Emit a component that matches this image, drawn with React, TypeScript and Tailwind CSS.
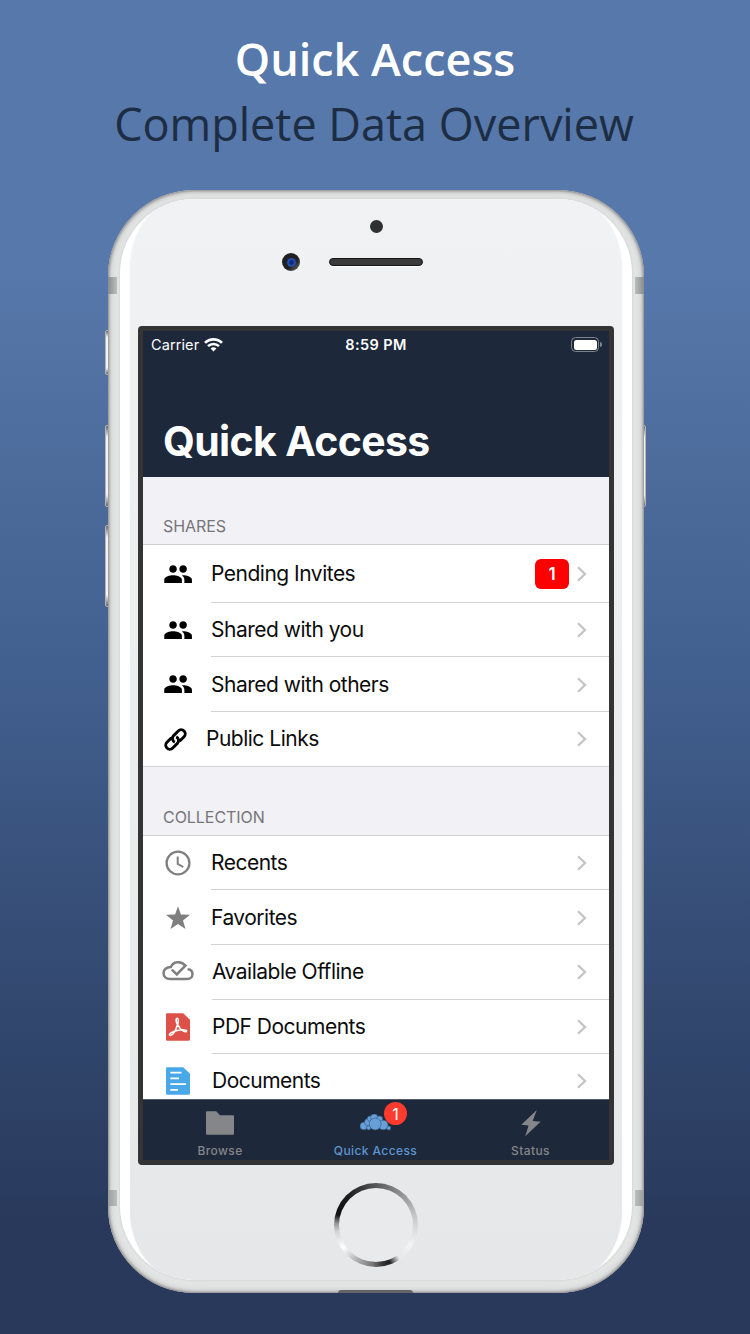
import React from "react";

function Chevron() {
  return (
    <svg className="h-[18px] w-[12px] shrink-0" viewBox="0 0 12 18" fill="none">
      <path d="M2 2.2 L9 9 L2 15.8" stroke="#c4c4c6" strokeWidth="2.3" />
    </svg>
  );
}

function People() {
  return (
    <svg className="h-[30.2px] w-[30.2px]" viewBox="0 0 24 24" fill="#000">
      <path d="M16 11c1.66 0 2.99-1.34 2.99-3S17.66 5 16 5c-1.66 0-3 1.34-3 3s1.34 3 3 3zm-8 0c1.66 0 2.99-1.34 2.99-3S9.66 5 8 5C6.34 5 5 6.34 5 8s1.34 3 3 3zm0 2c-2.33 0-7 1.17-7 3.5V19h14v-2.5c0-2.33-4.67-3.5-7-3.5zm8 0c-.29 0-.62.02-.97.05 1.16.84 1.97 1.97 1.97 3.45V19h6v-2.5c0-2.33-4.67-3.5-7-3.5z" />
    </svg>
  );
}

function Link() {
  return (
    <svg className="mr-[6px] h-[23px] w-[23px]" viewBox="-11.5 -11.5 23 23" fill="none" stroke="#000" strokeWidth="2.9">
      <g transform="rotate(-45)">
        <path d="M-1.6 -4.1 H-8 A4.1 4.1 0 0 0 -8 4.1 H-1.4 A4.1 4.1 0 0 0 2.4 -1.4" />
        <path d="M1.6 4.1 H8 A4.1 4.1 0 0 0 8 -4.1 H1.4 A4.1 4.1 0 0 0 -2.4 1.4" />
      </g>
    </svg>
  );
}

function Clock() {
  return (
    <svg className="h-[26px] w-[26px]" viewBox="0 0 26 26" fill="none" stroke="#7f7f7f" strokeWidth="2.3">
      <circle cx="13" cy="13" r="11.4" />
      <path d="M12.7 6.5 V13.8 L18.3 17" strokeWidth="2" />
    </svg>
  );
}

function Star() {
  return (
    <svg className="h-[24px] w-[24px]" viewBox="0 0 24 24" fill="#7f7f7f">
      <path d="M12 0.3 L14.9 8.6 L24 8.8 L17 14.4 L19.5 23 L12 18 L4.5 23 L7 14.4 L0 8.8 L9.1 8.6 Z" />
    </svg>
  );
}

function CloudCheck() {
  return (
    <svg className="mb-[3px] h-[20px] w-[32px]" viewBox="0 0 32 20" fill="none" stroke="#7f7f7f" strokeWidth="2.5">
      <path d="M23 4.2 C19.5 0 11.5 -0.1 8.9 5.9 C4.5 6 1.5 8.7 1.5 12 C1.5 15.5 4.2 18 8 18 H25 C28.4 18 30.5 16 30.5 13.2 C30.5 10.5 28.6 8.6 25.6 8.3" />
      <path d="M9.8 8.6 L14.8 13.4 L24.4 3.7" />
    </svg>
  );
}

function Pdf() {
  return (
    <svg className="h-[28px] w-[24px]" viewBox="0 0 24 28">
      <path d="M1 0.3 H17.2 L24 6.8 V26.6 Q24 27.7 23 27.7 H1 Q0 27.7 0 26.6 V1.3 Q0 0.3 1 0.3 Z" fill="#dd5149" />
      <path
        d="M11.6 11.5 C9.6 8.5 9.8 5.2 11.2 5.2 C12.7 5.2 12.6 8.5 11.6 11.5 C10 16.5 7 22.3 4.4 22.5 C2.2 22.2 4 19.5 8.5 18.2 C13 16.9 20.2 15.9 20.6 17.9 C20.6 20 15 18.5 11.6 11.5"
        fill="none"
        stroke="#fff"
        strokeWidth="1.6"
        strokeLinejoin="round"
      />
    </svg>
  );
}

function Doc() {
  return (
    <svg className="h-[28px] w-[24px]" viewBox="0 0 24 28">
      <path d="M1 0.3 H17.2 L24 6.8 V26.6 Q24 27.7 23 27.7 H1 Q0 27.7 0 26.6 V1.3 Q0 0.3 1 0.3 Z" fill="#49a8e8" />
      <path d="M4.3 5.6 H15.5 M4.3 11.4 H13 M4.3 17.1 H20 M4.3 22.8 H12" stroke="#fff" strokeWidth="1.8" />
    </svg>
  );
}

function Wifi() {
  return (
    <svg className="h-[14px] w-[19px]" viewBox="0 0 19 14" fill="none" stroke="#fff">
      <path d="M1 4.9 A12 12 0 0 1 18 4.9" strokeWidth="2.7" />
      <path d="M4 8.2 A7.8 7.8 0 0 1 15 8.2" strokeWidth="2.5" />
      <path d="M9.5 13.6 L6.6 10.6 A4.1 4.1 0 0 1 12.4 10.6 Z" fill="#fff" stroke="none" />
    </svg>
  );
}

function CloudLogo() {
  const circles: [number, number, number][] = [
    [3.8, 12, 3.8], [8.2, 8.3, 3.7], [10, 4.6, 2.7], [14.2, 3.8, 3.7], [19.5, 5.3, 3.2],
    [8.7, 13.8, 2.1], [28.7, 14, 2.1], [23.2, 11, 4.8], [15.2, 10, 5.9],
  ];
  return (
    <svg className="h-[17px] w-[31px]" viewBox="0 0 31 17">
      {circles.map(([cx, cy, r], i) => (
        <circle key={i} cx={cx} cy={cy} r={r} fill="#67a0d8" stroke="#36577d" strokeWidth="0.6" />
      ))}
    </svg>
  );
}

type RowProps = {
  icon: React.ReactNode;
  label: string;
  offset: string;
  line?: string;
  height?: string;
  badge?: string;
};

function Row({ icon, label, offset, line, height = "h-[54.6px]", badge }: RowProps) {
  return (
    <div className={`relative flex shrink-0 items-center ${height}`}>
      <div className="flex w-[70px] shrink-0 items-center justify-center">{icon}</div>
      <div className={`flex-1 whitespace-nowrap text-[21px] leading-[26px] tracking-[-0.5px] text-[#0c0c0c] ${offset}`}>{label}</div>
      {badge && (
        <div className="mr-[7px] flex h-[30px] w-[34px] items-center justify-center rounded-[6px] bg-[#fe0000] pt-px text-[17px] font-semibold text-white">
          {badge}
        </div>
      )}
      <div className="mr-[21px] flex">
        <Chevron />
      </div>
      {line && <div className={`absolute bottom-0 right-0 h-px bg-[#d3d3d6] ${line}`} />}
    </div>
  );
}

function Section({ title, size }: { title: string; size: string }) {
  return (
    <div className={`flex shrink-0 items-end border-b border-[#d0d0d5] bg-[#f2f1f6] pb-[7px] pl-5 text-[16px] leading-[22px] tracking-[-0.05px] text-[#75757a] ${size}`}>
      {title}
    </div>
  );
}

function SideButton({ place }: { place: string }) {
  return (
    <div
      className={`absolute w-[6px] rounded-[2px] border border-[#b4b5b6] bg-[linear-gradient(#666_0%,#f3f3f3_14%,#f3f3f3_86%,#666_100%)] ${place}`}
    />
  );
}

export default function App() {
  return (
    <div className="flex h-[1334px] w-[750px] flex-col items-center overflow-hidden bg-linear-to-b from-[#5778aa] from-20% via-[#42608f] via-50% to-[#28395b] to-92% font-['Inter',sans-serif]">
      <header className="flex h-[190px] shrink-0 flex-col items-center whitespace-nowrap pt-[26px] font-['Open_Sans',sans-serif] text-[45px] leading-[65px]">
        <h1 className="font-semibold text-white">Quick Access</h1>
        <p className="mr-[2px] text-[#1d2d44]">Complete Data Overview</p>
      </header>

      <div className="relative ml-[2px] h-[1103px] w-[536px] shrink-0">
        <SideButton place="left-[-3px] top-[140px] h-[45px]" />
        <SideButton place="left-[-3px] top-[235px] h-[82px]" />
        <SideButton place="left-[-3px] top-[335px] h-[82px]" />
        <SideButton place="right-[-2px] top-[235px] h-[82px]" />

        <div className="relative flex h-full w-full flex-col overflow-hidden rounded-[86px] bg-[#e4e5e5] px-[12px] pb-[13px] pt-[9px] shadow-[inset_0_0_3px_1px_#858585,inset_0_0_8px_1px_#c2c2c2]">
          <div className="absolute left-0 top-[87px] h-[17px] w-[9px] bg-linear-to-r from-[#888c8b] to-[#bcbfbe]" />
          <div className="absolute right-0 top-[87px] h-[17px] w-[9px] bg-linear-to-l from-[#888c8b] to-[#bcbfbe]" />
          <div className="absolute left-0 top-[1000px] h-[16px] w-[9px] bg-linear-to-r from-[#999d9c] to-[#bcbfbe]" />
          <div className="absolute right-0 top-[1000px] h-[16px] w-[9px] bg-linear-to-l from-[#999d9c] to-[#bcbfbe]" />
          <div className="absolute bottom-0 left-[230px] h-[3px] w-[75px] rounded-t-[3px] bg-[#666]" />

          <div className="flex flex-1 flex-col overflow-hidden rounded-[74px] bg-white px-[10px] shadow-[0_0_2px_1px_#d6d7d8]">
            <div className="flex flex-1 flex-col items-center rounded-[54px/70px] bg-linear-to-b from-[#f1f2f4] to-[#e6e7e9] shadow-[0_0_2px_#f1f2f3]">
              <div className="relative flex h-[127px] w-full shrink-0 justify-center">
                <div className="absolute left-[240px] top-[21px] h-[13px] w-[13px] rounded-full bg-[#303032]" />
                <div className="absolute left-[152px] top-[54px] flex h-[18px] w-[18px] items-center justify-center rounded-full bg-linear-to-br from-[#202022] from-60% to-[#777]">
                  <div className="h-[9px] w-[9px] rounded-full bg-[radial-gradient(circle,#0c2a80_25%,#2c55b4_55%,#142a66)]" />
                </div>
                <div className="absolute left-[199px] top-[59px] h-[8px] w-[94px] rounded-full border border-[#151515] bg-[#3b3b3b] shadow-[0_1px_0_#fff]" />
              </div>

              <div className="flex h-[839px] w-[476px] shrink-0 flex-col overflow-hidden rounded-[4px] border-[5px] border-[#343434] bg-white">
                <div className="flex h-[146px] shrink-0 flex-col justify-between bg-[#1d283a] text-white">
                  <div className="grid grid-cols-3 items-center pl-[8px] pr-[7px] pt-[3px] text-[14.5px] leading-[21px]">
                    <div className="flex items-center gap-[5px] tracking-[0.1px]">
                      Carrier
                      <Wifi />
                    </div>
                    <div className="-ml-px text-center font-semibold tracking-[0.4px]">8:59 PM</div>
                    <div className="flex items-center justify-end">
                      <div className="h-[15px] w-[28px] rounded-[4.5px] border border-[#7d8490] p-[1.5px]">
                        <div className="h-full w-full rounded-[2.5px] bg-white" />
                      </div>
                      <div className="ml-px h-[5px] w-[1.5px] rounded-r-full bg-[#7d8490]" />
                    </div>
                  </div>
                  <h2 className="mb-[11px] whitespace-nowrap pl-5 text-[41px] font-bold leading-[50px] tracking-[-0.65px]">Quick Access</h2>
                </div>

                <div className="flex h-[622px] shrink-0 flex-col overflow-hidden">
                  <Section title="SHARES" size="h-[68px]" />
                  <Row icon={<People />} label="Pending Invites" offset="-ml-[2px]" line="left-[68px]" height="h-[57.7px]" badge="1" />
                  <Row icon={<People />} label="Shared with you" offset="-ml-[2px]" line="left-[68px]" />
                  <Row icon={<People />} label="Shared with others" offset="-ml-[2px]" line="left-[68px]" />
                  <Row icon={<Link />} label="Public Links" offset="-ml-[7px]" />
                  <Section title="COLLECTION" size="h-[69.3px] border-t" />
                  <Row icon={<Clock />} label="Recents" offset="-ml-[2px]" line="left-[68px]" />
                  <Row icon={<Star />} label="Favorites" offset="-ml-[2px]" line="left-[68px]" />
                  <Row icon={<CloudCheck />} label="Available Offline" offset="-ml-[1px]" line="left-[69px]" />
                  <Row icon={<Pdf />} label="PDF Documents" offset="-ml-[1px]" line="left-[69px]" />
                  <Row icon={<Doc />} label="Documents" offset="-ml-[1px]" />
                </div>

                <nav className="grid flex-1 grid-cols-3 border-t border-[#555c66] bg-[#1d283a] pr-px text-[12px] font-medium leading-[16px] tracking-[0.4px]">
                  <div className="-ml-px flex flex-col items-center justify-between pb-px pt-[11px] text-[#85868a]">
                    <svg className="h-[24px] w-[28px]" viewBox="0 0 28 24" fill="#85868a">
                      <path d="M0 1.2 Q0 0.3 1 0.3 H10.2 L14 4.3 H27 Q28 4.3 28 5.3 V22.7 Q28 23.7 27 23.7 H1 Q0 23.7 0 22.7 Z" />
                    </svg>
                    Browse
                  </div>
                  <div className="relative flex flex-col items-center justify-between pb-px pt-[14px] text-[#5d96cf]">
                    <CloudLogo />
                    <div className="absolute left-[86px] top-[2px] flex h-[23px] w-[23px] items-center justify-center rounded-full bg-[#ff3b30] text-[16px] font-normal tracking-normal text-white">1</div>
                    Quick Access
                  </div>
                  <div className="flex flex-col items-center justify-between pb-px pt-[9px] text-[#85868a]">
                    <svg className="h-[28px] w-[20px]" viewBox="0 0 20 28" fill="#85868a">
                      <path d="M15.8 1 L0.3 15.7 L7.6 16.6 L4.2 27.3 L19.6 12.8 L11.7 12 Z" />
                    </svg>
                    Status
                  </div>
                </nav>
              </div>

              <div className="mt-[18px] h-[84px] w-[84px] shrink-0 rounded-full bg-[conic-gradient(#55575a_0deg,#8a8b8d_35deg,#c4c5c6_75deg,#f4f4f4_120deg,#e8e8e8_145deg,#222_160deg,#333_170deg,#777_185deg,#b5b5b5_210deg,#fff_235deg,#d5d5d5_260deg,#999_272deg,#111_285deg,#1b1c1e_315deg,#3a3b3d_340deg,#55575a_360deg)] p-[5px]">
                <div className="h-full w-full rounded-full bg-[#e9eaec]" />
              </div>
            </div>
          </div>
        </div>
      </div>
    </div>
  );
}
